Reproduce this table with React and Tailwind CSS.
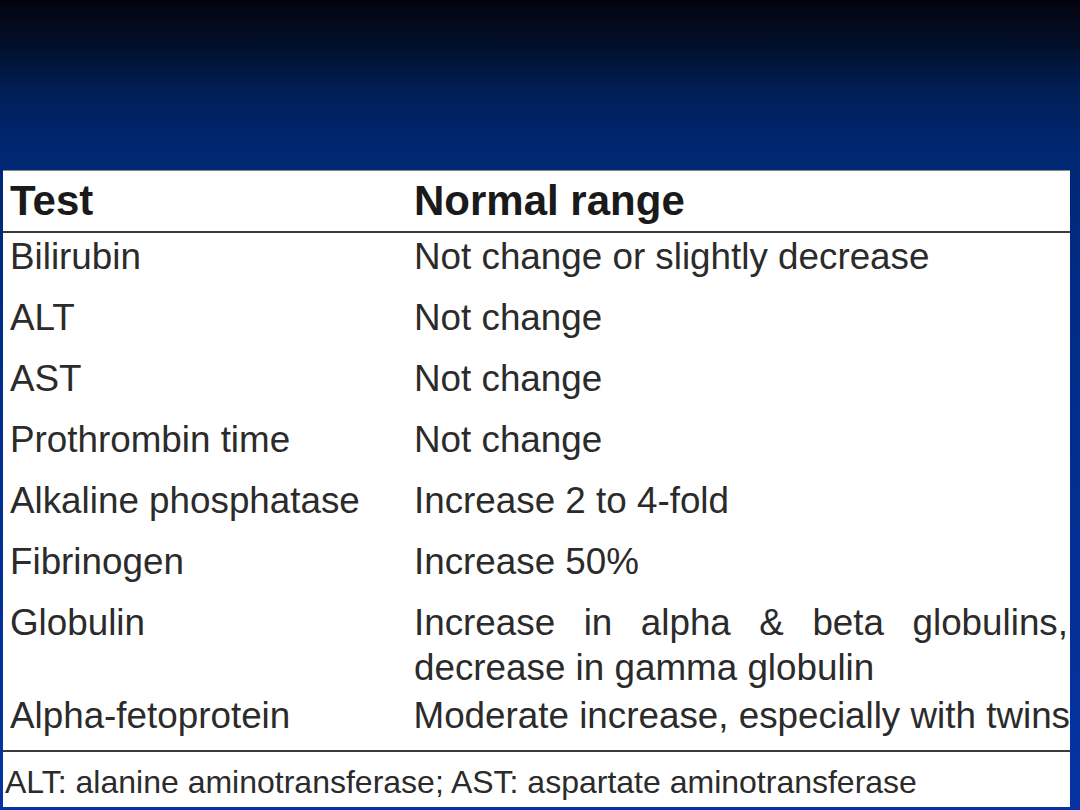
const rows = [
  { test: "Bilirubin", range: "Not change or slightly decrease" },
  { test: "ALT", range: "Not change" },
  { test: "AST", range: "Not change" },
  { test: "Prothrombin time", range: "Not change" },
  { test: "Alkaline phosphatase", range: "Increase 2 to 4-fold" },
  { test: "Fibrinogen", range: "Increase 50%" },
];

const justified = ["Increase", "in", "alpha", "&", "beta", "globulins,"];

export default function App() {
  return (
    <div className="w-[1080px] h-[810px] overflow-hidden flex flex-col bg-[linear-gradient(to_bottom,#03030e_0%,#02112c_6%,#001d55_11%,#00266e_17%,#002c86_35%,#0533a2_100%)] font-['Liberation_Sans',Arial,sans-serif]">
      {/* title area (empty) */}
      <div className="h-[170px] shrink-0" />

      {/* table picture */}
      <div className="ml-[3px] w-[1067px] h-[637px] bg-white border-t border-[#8a8a8a] text-[#2b2b2b] flex flex-col">
        {/* header */}
        <div className="flex h-[60px] leading-[60px] text-[42px] font-bold text-[#1a1a1a]">
          <div className="w-[411px] pl-[7px]">Test</div>
          <div>Normal range</div>
        </div>
        <div className="h-[2px] bg-[#3a3a3a]" />

        <div className="pt-[2px] text-[36.8px]">
          {rows.map((r) => (
            <div key={r.test} className="flex h-[61px] leading-[44px]">
              <div className="w-[411px] pl-[7px]">{r.test}</div>
              <div>{r.range}</div>
            </div>
          ))}

          {/* globulin */}
          <div className="flex h-[93px]">
            <div className="w-[411px] pl-[7px] leading-[44px]">Globulin</div>
            <div className="w-[654px]">
              <div className="flex justify-between leading-[44px]">
                {justified.map((w) => (
                  <span key={w}>{w}</span>
                ))}
              </div>
              <div className="leading-[45px]">decrease in gamma globulin</div>
            </div>
          </div>

          <div className="flex h-[44px] leading-[44px]">
            <div className="w-[411px] pl-[7px]">Alpha-fetoprotein</div>
            <div className="whitespace-nowrap">Moderate increase, especially with twins</div>
          </div>
        </div>

        <div className="mt-[12px] h-[2px] bg-[#3a3a3a]" />

        <div className="mt-[12px] pl-[2px] text-[32px] leading-[36px] whitespace-nowrap">
          ALT: alanine aminotransferase; AST: aspartate aminotransferase
        </div>
      </div>
    </div>
  );
}
